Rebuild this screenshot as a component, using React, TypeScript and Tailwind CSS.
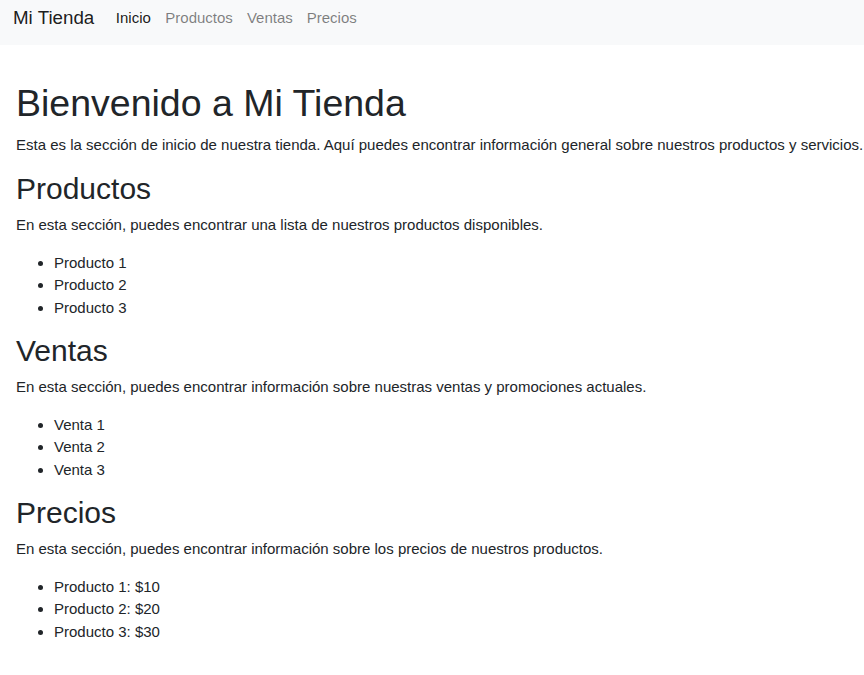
const font = { fontFamily: '"Liberation Sans", Arial, sans-serif' };

const sections = [
  {
    title: "Productos",
    text: "En esta sección, puedes encontrar una lista de nuestros productos disponibles.",
    items: ["Producto 1", "Producto 2", "Producto 3"],
  },
  {
    title: "Ventas",
    text: "En esta sección, puedes encontrar información sobre nuestras ventas y promociones actuales.",
    items: ["Venta 1", "Venta 2", "Venta 3"],
  },
  {
    title: "Precios",
    text: "En esta sección, puedes encontrar información sobre los precios de nuestros productos.",
    items: ["Producto 1: $10", "Producto 2: $20", "Producto 3: $30"],
  },
];

export default function App() {
  return (
    <div className="min-h-screen bg-white text-[15px] leading-[1.5] text-[#212529]" style={font}>
      <nav className="flex h-[45px] items-start bg-[#f8f9fa] px-[13px] pt-[3px] leading-[30px]">
        <a href="#" className="mr-[14px] text-[18.75px] text-black/90">
          Mi Tienda
        </a>
        <ul className="flex">
          <li><a href="#" className="block px-[7.5px] text-black/90">Inicio</a></li>
          <li><a href="#" className="block px-[7px] text-black/50">Productos</a></li>
          <li><a href="#" className="block px-[7px] text-black/50">Ventas</a></li>
          <li><a href="#" className="block px-[7px] text-black/50">Precios</a></li>
        </ul>
      </nav>

      <main className="pl-[16px] pt-[36px]">
        <h1 className="mb-[7.5px] text-[37.5px] leading-[1.2]">Bienvenido a Mi Tienda</h1>
        <p className="mb-[15px] whitespace-nowrap">
          Esta es la sección de inicio de nuestra tienda. Aquí puedes encontrar información general sobre nuestros productos y servicios.
        </p>
        {sections.map((s) => (
          <section key={s.title}>
            <h2 className="mb-[7px] text-[30px] leading-[1.2]">{s.title}</h2>
            <p className="mb-[15px]">{s.text}</p>
            <ul className="mb-[14px] list-disc pl-[38px]">
              {s.items.map((item) => (
                <li key={item}>{item}</li>
              ))}
            </ul>
          </section>
        ))}
      </main>
    </div>
  );
}
